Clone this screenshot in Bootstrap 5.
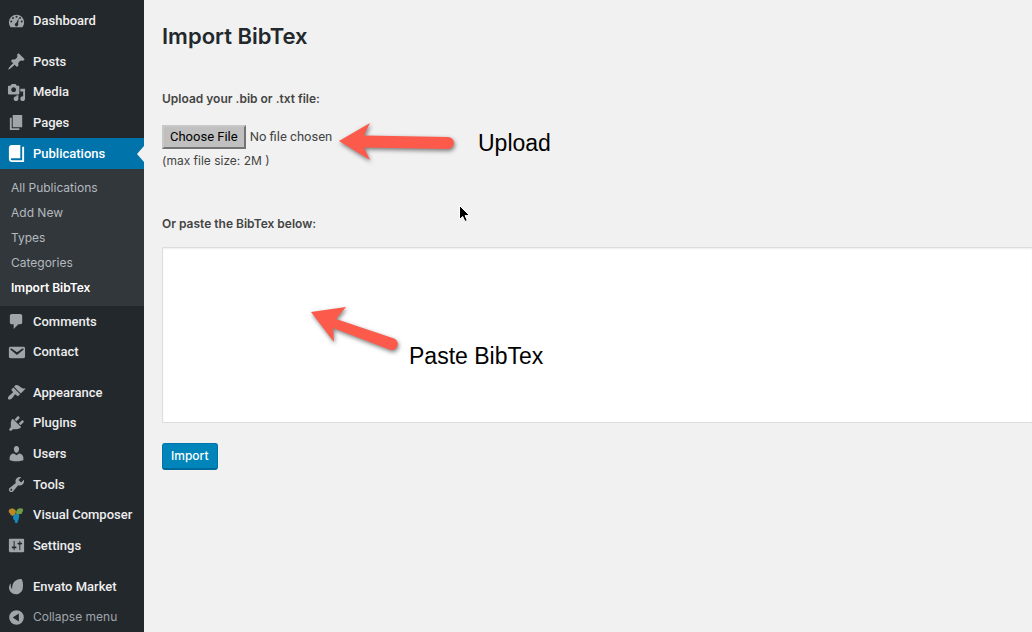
<!DOCTYPE html>
<html lang="en">
<head>
<meta charset="utf-8">
<meta name="viewport" content="width=device-width, initial-scale=1">
<title>Import BibTex</title>
<link href="https://cdn.jsdelivr.net/npm/bootstrap@5.3.0/dist/css/bootstrap.min.css" rel="stylesheet">
<style>
body { background: #f1f1f1; color: #444; font: 400 12px/18px Inter, "Liberation Sans", sans-serif; overflow-x: hidden; }
.sidebar { width: 144px; background: #23282d; padding-top: 5px; }
.menu-group + .menu-group { margin-top: 10px; }
.menu-link { height: 31px; padding-left: 7px; gap: 7px; color: #eee; font: 500 13px/18px Roboto, "Liberation Sans", sans-serif; text-decoration: none; white-space: nowrap; }
.menu-group > li:nth-child(3n+2) > .menu-link { height: 30px; }
.menu-link:hover { color: #00b9eb; }
.menu-link svg { width: 19px; height: 19px; fill: #a0a5aa; flex: none; }
.menu-link.current { background: #0073aa; color: #fff; }
.menu-link.current svg { fill: #fff; }
.menu-link.current::after { content: ""; position: absolute; right: 0; top: 50%; margin-top: -8px; border: 8px solid transparent; border-left: 0; border-right: 7px solid #f1f1f1; }
.collapse-link { color: #a0a5aa; font: 400 12px/18px Inter, "Liberation Sans", sans-serif; background: none; border: 0; }
.submenu { background: #32373c; padding: 6px 0; font-size: 12px; }
.submenu a { display: block; line-height: 25px; padding-left: 11px; color: #b4b9be; text-decoration: none; }
.submenu a.active { color: #fff; font-weight: 600; }
.content { padding: 22px 0 0 18px; overflow: hidden; }
.page-title { font-size: 22px; line-height: 28px; font-weight: 600; color: #23282d; margin-bottom: 40px; }
.field-title { font-weight: 600; line-height: 18px; }
.upload-field { margin-top: 17px; margin-bottom: 45px; }
.file-input { display: block; width: 280px; font: 400 13px/18px Roboto, "Liberation Sans", sans-serif; color: #444; padding: 0; }
.file-input::file-selector-button { font: inherit; padding: 1px 6px; margin-right: 4px; background: #c0c0c0; color: #000; border: 2px outset #c8c8c8; border-radius: 0; }
.file-hint { margin-top: 3px; }
.bib-text { display: block; width: 100%; height: 176px; border: 1px solid #ddd; border-right: 0; box-shadow: inset 0 1px 2px rgba(0,0,0,.07); background: #fff; resize: none; margin-top: 14px; }
.import-btn { margin-top: 20px; height: 27px; padding: 0 8px; font-size: 12px; line-height: 22px; font-weight: 500; color: #fff; background: #0085ba; border: 1px solid #0073aa; border-bottom: 2px solid #006799; border-radius: 3px; }
.import-btn:hover { background: #008ec2; color: #fff; }
.note { position: absolute; font: 23px/28px "Liberation Sans", Arial, sans-serif; color: #000; white-space: nowrap; pointer-events: none; }
.arrow { position: absolute; fill: #fc5a4b; filter: drop-shadow(1px 2px 2px rgba(0,0,0,.5)); pointer-events: none; }
.upload-arrow { left: 176px; top: -4px; }
.upload-note { left: 316px; top: 4px; }
.paste-arrow { left: 148px; top: 59px; }
.paste-note { left: 247px; top: 95px; }
.pointer { position: absolute; left: 296px; top: -43px; }
</style>
</head>
<body>
<div class="d-flex min-vh-100">
<nav class="sidebar flex-shrink-0" aria-label="Main menu">
  <ul class="menu-group list-unstyled mb-0">
    <li><a class="menu-link d-flex align-items-center" href="#"><svg viewBox="0 0 20 20"><path fill-rule="evenodd" d="M3.8 17h12.4A8 8 0 1 0 3.800 17zM10 5a1 1 0 1 1 0 2 1 1 0 0 1 0-2zM6.300 6.300a1 1 0 1 1 0 2 1 1 0 0 1 0-2zM13.700 6.300a1 1 0 1 1 0 2 1 1 0 0 1 0-2zM4.500 10a1 1 0 1 1 0 2 1 1 0 0 1 0-2zM15.500 10a1 1 0 1 1 0 2 1 1 0 0 1 0-2zM12.400 7.500l-.7 6.200a1.800 1.800 0 1 1-2.100-1.100z"/></svg>Dashboard</a></li>
  </ul>
  <ul class="menu-group list-unstyled mb-0">
    <li><a class="menu-link d-flex align-items-center" href="#"><svg viewBox="0 0 20 20"><path d="M10.440 3.020l1.820-1.820 6.360 6.350-1.830 1.820c-1.050-.68-2.480-.57-3.410.36l-.75.75c-.92.93-1.040 2.350-.35 3.410l-1.830 1.820-2.410-2.410-2.800 2.790c-.42.42-3.380 2.710-3.800 2.290s1.860-3.390 2.280-3.810l2.790-2.790L4.100 9.360l1.830-1.820c1.050.69 2.480.57 3.400-.36l.75-.75c.93-.92 1.050-2.350.36-3.410z"/></svg>Posts</a></li>
    <li><a class="menu-link d-flex align-items-center" href="#"><svg viewBox="0 0 20 20"><path d="M13 11V4c0-.55-.45-1-1-1h-1.670L9 1H5L3.670 3H2c-.55 0-1 .45-1 1v7c0 .55.45 1 1 1h10c.55 0 1-.45 1-1zM7 4.500c1.380 0 2.500 1.120 2.500 2.500S8.380 9.500 7 9.500 4.500 8.380 4.500 7 5.620 4.500 7 4.500zM14 6h5v10.500c0 1.380-1.120 2.500-2.500 2.500S14 17.880 14 16.500s1.120-2.500 2.500-2.500c.17 0 .34.02.5.05V9h-3V6zm-4 8.050V13h2v3.500c0 1.380-1.120 2.500-2.500 2.500S7 17.880 7 16.500 8.120 14 9.500 14c.17 0 .34.02.5.05z"/></svg>Media</a></li>
    <li><a class="menu-link d-flex align-items-center" href="#"><svg viewBox="0 0 20 20"><path d="M6 15V2h10v13H6zm-1 1h8v2H3V5h2v11z"/></svg>Pages</a></li>
    <li>
      <a class="menu-link current d-flex align-items-center position-relative" href="#"><svg viewBox="0 0 20 20"><path d="M16 3h2v16H5c-1.660 0-3-1.340-3-3V4c0-1.660 1.340-3 3-3h9v14H5c-.55 0-1 .45-1 1s.45 1 1 1h11V3z"/></svg>Publications</a>
      <ul class="submenu list-unstyled mb-0">
        <li><a href="#">All Publications</a></li>
        <li><a href="#">Add New</a></li>
        <li><a href="#">Types</a></li>
        <li><a href="#">Categories</a></li>
        <li><a class="active" href="#" aria-current="page">Import BibTex</a></li>
      </ul>
    </li>
  </ul>
  <ul class="menu-group list-unstyled mb-0 mt-0">
    <li><a class="menu-link d-flex align-items-center" href="#"><svg viewBox="0 0 20 20"><path d="M5 2h9c1.100 0 2 .9 2 2v7c0 1.100-.9 2-2 2h-2l-5 5v-5H5c-1.100 0-2-.9-2-2V4c0-1.100.9-2 2-2z"/></svg>Comments</a></li>
    <li><a class="menu-link d-flex align-items-center" href="#"><svg viewBox="0 0 20 20"><path d="M3.870 4h13.250C18.370 4 19 4.590 19 5.790v8.420c0 1.190-.63 1.790-1.880 1.790H3.870c-1.250 0-1.880-.6-1.880-1.790V5.790c0-1.200.63-1.790 1.880-1.790zm6.620 8.600l6.740-5.530c.24-.2.43-.66.13-1.070-.29-.41-.82-.42-1.170-.17l-5.700 3.860L4.800 5.830c-.35-.25-.88-.24-1.170.17-.3.41-.11.87.13 1.070z"/></svg>Contact</a></li>
  </ul>
  <ul class="menu-group list-unstyled mb-0">
    <li><a class="menu-link d-flex align-items-center" href="#"><svg viewBox="0 0 20 20"><path d="M14.480 11.060L7.410 3.990l1.500-1.500c.5-.56 2.300-.47 3.510.32 1.210.8 1.430 1.280 2.910 2.100 1.180.64 2.450 1.260 4.450.85zm-.71.71L6.700 4.700 4.930 6.470c-.39.39-.39 1.020 0 1.410l1.060 1.060c.39.39.39 1.030 0 1.420-.6.6-1.430 1.110-2.210 1.690-.35.26-.7.53-1.010.84C1.430 14.230.4 16.080 1.400 17.070c.99 1 2.840-.03 4.180-1.360.31-.31.58-.66.85-1.020.57-.78 1.080-1.610 1.690-2.210.39-.39 1.020-.39 1.410 0l1.060 1.060c.39.39 1.020.39 1.410 0z"/></svg>Appearance</a></li>
    <li><a class="menu-link d-flex align-items-center" href="#"><svg viewBox="0 0 20 20"><path d="M13.110 4.360L9.870 7.600 8 5.730l3.240-3.240c.35-.34 1.050-.2 1.560.32.52.51.66 1.210.31 1.550zm-8 1.770l.91-1.120 9.010 9.010-1.190.84c-.71.71-2.630 1.160-3.820 1.160H6.140L4.900 17.260c-.59.59-1.540.59-2.120 0-.59-.58-.59-1.530 0-2.120l1.240-1.240v-3.880c0-1.130.4-3.190 1.090-3.890zm7.260 3.970l3.240-3.240c.34-.35 1.040-.21 1.550.31.52.51.66 1.210.31 1.550l-3.240 3.250z"/></svg>Plugins</a></li>
    <li><a class="menu-link d-flex align-items-center" href="#"><svg viewBox="0 0 20 20"><path d="M10 9.250c-2.270 0-2.730-3.440-2.730-3.440C7 4.020 7.820 2 9.970 2c2.160 0 2.980 2.020 2.710 3.810 0 0-.41 3.440-2.680 3.440zm0 2.570L12.720 10c2.390 0 4.520 2.330 4.520 4.530v2.490s-3.650 1.130-7.240 1.130c-3.650 0-7.240-1.130-7.240-1.130v-2.490c0-2.250 1.940-4.480 4.470-4.480z"/></svg>Users</a></li>
    <li><a class="menu-link d-flex align-items-center" href="#"><svg viewBox="0 0 20 20"><path d="M16.680 9.770c-1.340 1.340-3.300 1.670-4.950.99l-5.410 6.520c-.99.99-2.590.99-3.580 0s-.99-2.590 0-3.570l6.520-5.420c-.68-1.650-.35-3.610.99-4.950 1.280-1.280 3.120-1.620 4.720-1.060l-2.890 2.890 2.820 2.820 2.860-2.870c.53 1.580.18 3.390-1.080 4.650zM3.810 16.210c.4.39 1.040.39 1.430 0 .4-.4.4-1.040 0-1.430-.39-.4-1.030-.4-1.430 0-.39.39-.39 1.030 0 1.430z"/></svg>Tools</a></li>
    <li><a class="menu-link d-flex align-items-center" href="#"><svg viewBox="0 0 20 20"><path fill="#b98a23" d="M2 4.500C3 2 7 1.800 8.800 4.200c.8 1.200.6 2.300.2 3.300L8 9.500C6 11 3 10 3.500 8 2 7.500 1.500 6 2 4.500z"/><path fill="#6d9c47" d="M9.500 7.500c-.3-3 2.500-5.500 5-5C17 2 17.800 5 16 6.200c0 2-1.600 2.600-3 2.200-.8 1.600-3.100 1.400-3.500-.9z"/><path fill="#1787b8" d="M6.500 11c.2-2.300 2.500-3.200 4.200-2.200 2.300 0 3 2.700 1.600 4.200.2 1.200-.1 2-.9 2.700 0 1.600-.9 2.800-2 2.300-1.300-.3-1.400-1.700-1-2.800C6.800 14.700 6 13 6.500 11z"/></svg>Visual Composer</a></li>
    <li><a class="menu-link d-flex align-items-center" href="#"><svg viewBox="0 0 20 20"><path fill-rule="evenodd" d="M18 16V4c0-.55-.45-1-1-1H3c-.55 0-1 .45-1 1v12c0 .55.45 1 1 1h14c.55 0 1-.45 1-1zM8 11h1c.55 0 1 .45 1 1s-.45 1-1 1H8v1.500c0 .28-.22.5-.5.5s-.5-.22-.5-.5V13H6c-.55 0-1-.45-1-1s.45-1 1-1h1V5.500c0-.28.22-.5.5-.5s.5.22.5.5V11zm5-2h-1c-.55 0-1-.45-1-1s.45-1 1-1h1V5.500c0-.28.22-.5.5-.5s.5.22.5.5V7h1c.55 0 1 .45 1 1s-.45 1-1 1h-1v5.500c0 .28-.22.5-.5.5s-.5-.22-.5-.5V9z"/></svg>Settings</a></li>
  </ul>
  <ul class="menu-group list-unstyled mb-0">
    <li><a class="menu-link d-flex align-items-center" href="#"><svg viewBox="0 0 20 20"><path d="M15 2.200c-1.500-.8-6.500 1-8.300 4C5.300 8.500 5.300 11 5.500 12c0 .4-.4.4-.6.1-1-1.300-1.200-3.200-.9-4.600.1-.4-.3-.6-.5-.3C1 10.500 2 15 5.500 17c4.500 2.500 9.800.3 11-4.500C17.500 8.500 16.500 3 15 2.200z"/></svg>Envato Market</a></li>
    <li><button type="button" class="menu-link collapse-link d-flex align-items-center w-100"><svg viewBox="0 0 20 20"><path fill-rule="evenodd" d="M10 2.300a7.700 7.700 0 1 1 0 15.400 7.700 7.700 0 0 1 0-15.400zM12.500 5.700v8.600L6 10z"/></svg>Collapse menu</button></li>
  </ul>
</nav>
<main class="content flex-grow-1">
  <h1 class="page-title">Import BibTex</h1>
  <form>
    <label class="field-title d-block" for="bibfile">Upload your .bib or .txt file:</label>
    <div class="upload-field position-relative">
      <input class="file-input" type="file" id="bibfile" accept=".bib,.txt">
      <div class="file-hint">(max file size: 2M )</div>
      <svg class="arrow upload-arrow" width="116" height="42" viewBox="0 0 116 42"><path d="M1 20L32 2 26 14.500 110 16a6 6 0 0 1 0 12L26 26.500l6 12.500z"/></svg>
      <div class="note upload-note">Upload</div>
    </div>
    <label class="field-title d-block" for="bibtext">Or paste the BibTex below:</label>
    <div class="position-relative">
      <textarea class="bib-text" id="bibtext"></textarea>
      <svg class="arrow paste-arrow" width="92" height="46" viewBox="0 0 92 46"><path d="M1 6L36 1 26 13 84 32.500a6 6 0 0 1-4 11.300L23 22 24 36z"/></svg>
      <div class="note paste-note">Paste BibTex</div>
      <svg class="pointer" width="13" height="20" viewBox="0 0 13 20"><path d="M1.500 1.500v14l3.200-3 2.200 5 2.400-1-2.200-4.900h4.500z" stroke="#fff" stroke-width="1"/></svg>
    </div>
    <button type="submit" class="btn import-btn">Import</button>
  </form>
</main>
</div>
<script src="https://cdn.jsdelivr.net/npm/bootstrap@5.3.0/dist/js/bootstrap.bundle.min.js"></script>
</body>
</html>
